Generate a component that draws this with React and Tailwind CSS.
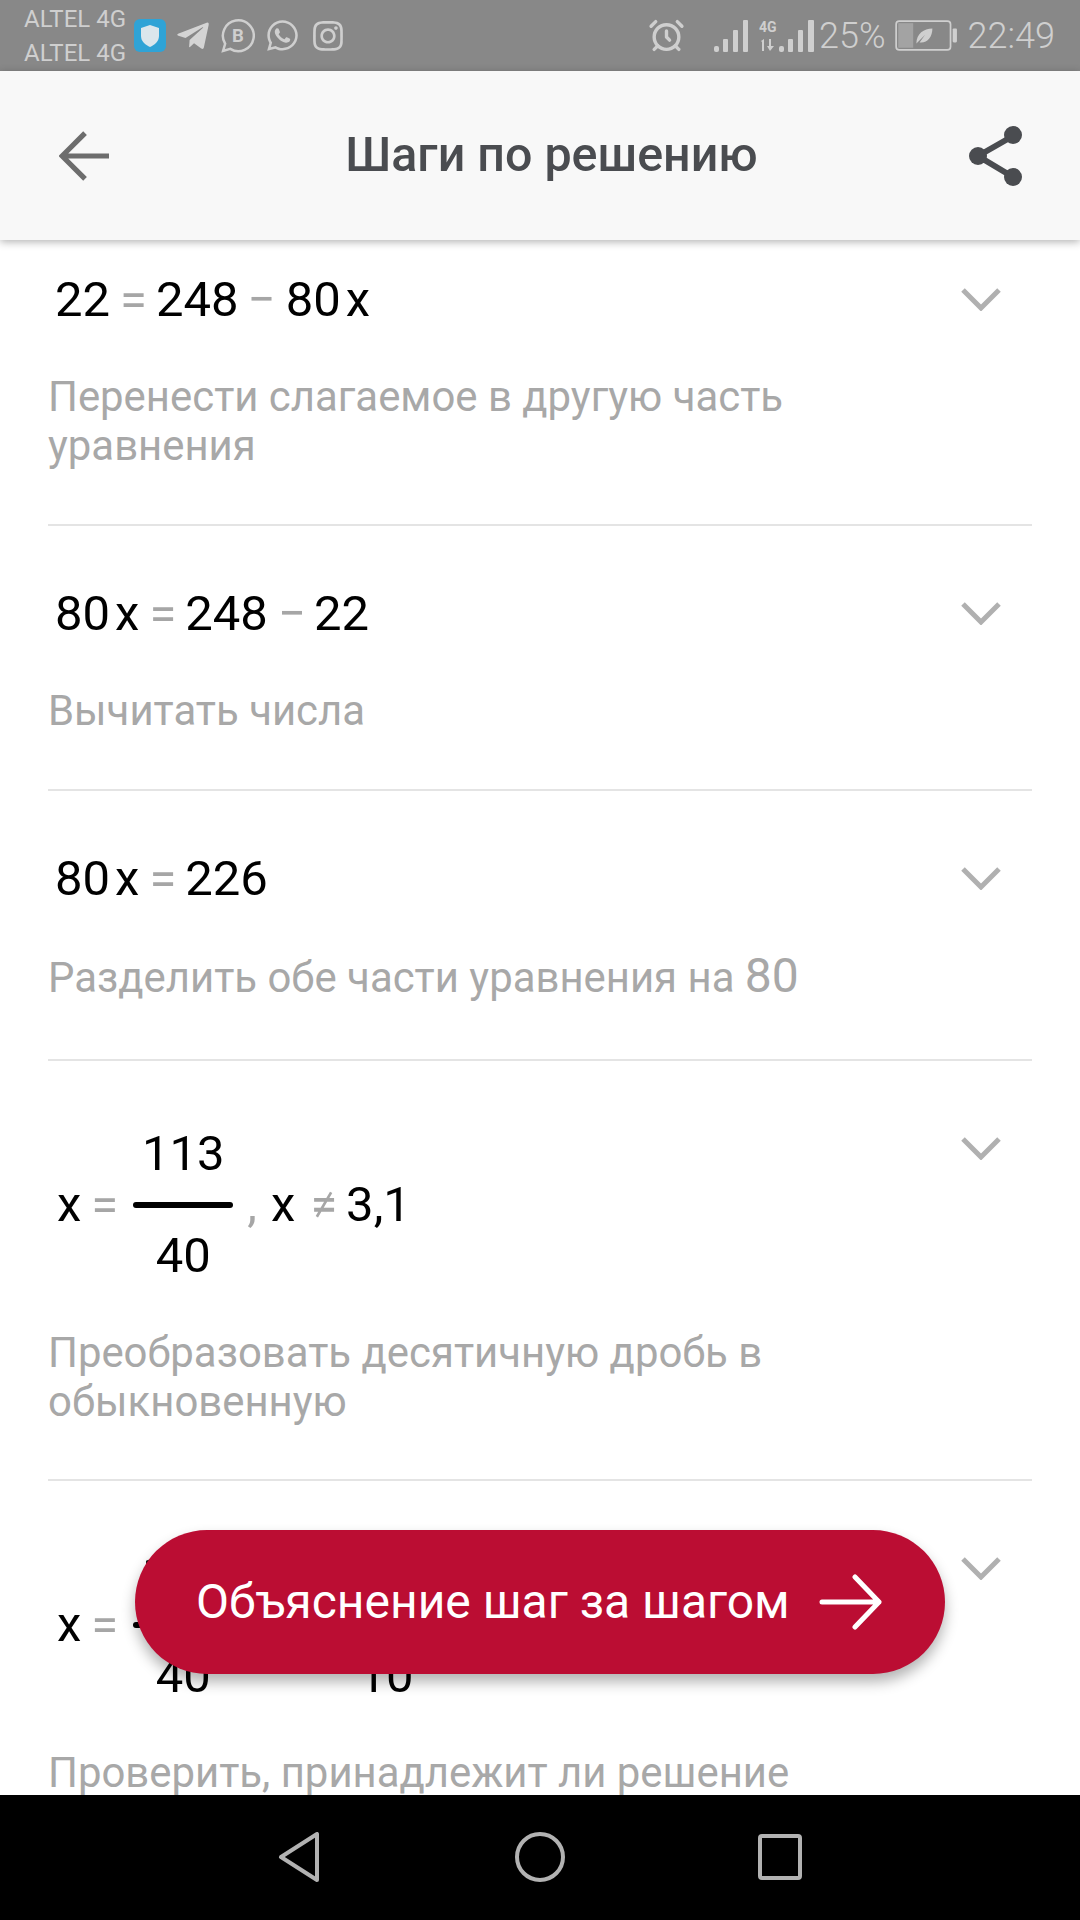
import { AlarmClock } from 'lucide-react'
import { FaInstagram, FaTelegramPlane, FaWhatsapp } from 'react-icons/fa'

const Num = ({ children, className = '' }) => <span className={`text-black ${className}`}>{children}</span>
const Op = ({ children, className = '' }) => <span className={`text-[#a6a6a6] ${className}`}>{children}</span>

function Fraction({ top, bottom, className = 'w-[100px]' }) {
    return (
        <div className={`flex flex-col items-center ${className}`}>
            <span className="h-[66px] leading-[66px] text-black">{top}</span>
            <span className="my-[15px] h-[6px] w-full rounded-full bg-black" />
            <span className="h-[66px] leading-[66px] text-black">{bottom}</span>
        </div>
    )
}

function Step({ desc, children, tall = false, pad = 'pb-[54px]' }) {
    return (
        <section className={`mx-12 border-b-2 border-[#e4e4e4] pt-[58px] ${pad}`}>
            <div className="flex items-start justify-between">
                <div className={`flex items-center text-[49px] ${tall ? 'mt-[2px] h-[168px] pl-[9px]' : 'h-[60px] pl-[7px]'}`}>
                    {children}
                </div>
                <svg className="mr-[31px] mt-[17px]" width="40" height="24" viewBox="0 0 40 24" fill="none" stroke="#b0b0b0" strokeWidth="5">
                    <path d="M2 3 L20 21 L38 3" />
                </svg>
            </div>
            <p className={`${tall ? 'mt-[39px]' : 'mt-[42px]'} max-w-[880px] text-[41.9px] leading-[49px] text-[#a8a8a8]`}>{desc}</p>
        </section>
    )
}

function StatusBar() {
    return (
        <header className="flex h-[71px] items-center justify-between bg-[#888888] pl-6 pr-[25px] text-[#cfcfcf]">
            <div className="flex items-center">
                <div className="w-[110px] text-[24px] leading-[34px]">
                    <div>ALTEL 4G</div>
                    <div>ALTEL 4G</div>
                </div>
                <div className="flex h-[33px] w-[32px] items-center justify-center rounded-md bg-[#2fa3d6]">
                    <svg width="22" height="24" viewBox="0 0 22 24">
                        <path d="M11 1 L20 4 V12 C20 18 15 21 11 23 C7 21 2 18 2 12 V4 Z" fill="#dbe6ec" />
                    </svg>
                </div>
                <FaTelegramPlane className="ml-[9px] text-[36px] text-[#d4d4d4]" />
                <svg className="ml-[9px]" width="35" height="35" viewBox="0 0 34 34" fill="none" stroke="#cfcfcf" strokeWidth="2.4">
                    <path d="M3 32 L5 25 A15 15 0 1 1 10 30 Z" />
                    <text x="17.5" y="23" textAnchor="middle" fontSize="18" fontWeight="700" fontFamily="Roboto" fill="#cfcfcf" stroke="none">B</text>
                </svg>
                <FaWhatsapp className="ml-[10px] text-[35px]" />
                <FaInstagram className="ml-[11px] text-[34px]" />
            </div>
            <div className="flex items-center">
                <AlarmClock size={37} strokeWidth={2.2} />
                <svg className="ml-[29px]" width="35" height="34" viewBox="0 0 35 34" fill="#cfcfcf">
                    <rect x="0" y="27" width="5" height="6" rx="2" />
                    <rect x="9" y="20" width="5" height="13" rx="1" />
                    <rect x="19" y="11" width="5" height="22" rx="1" />
                    <rect x="29" y="1" width="5" height="32" rx="1" />
                </svg>
                <svg className="ml-[10px]" width="56" height="34" viewBox="0 0 56 34" fill="#cfcfcf">
                    <text x="0" y="13" fontSize="14" fontWeight="700" fontFamily="Roboto">4G</text>
                    <path d="M2 22 L5 20 V32 H3 V23 Z M10 20 H12 V27 L15 27 L11 32 L8 27 H10 Z" />
                    <rect x="20" y="27" width="5" height="6" rx="2" />
                    <rect x="29" y="20" width="5" height="13" rx="1" />
                    <rect x="39" y="11" width="5" height="22" rx="1" />
                    <rect x="49" y="1" width="6" height="32" rx="1" />
                </svg>
                <span className="ml-[4px] text-[36px] font-light">25%</span>
                <svg className="ml-[9px]" width="62" height="32" viewBox="0 0 58 30" fill="none">
                    <rect x="1" y="1" width="51" height="27" rx="3" stroke="#cfcfcf" strokeWidth="1.6" />
                    <rect x="3" y="3" width="14" height="23" fill="#a3a3a3" />
                    <rect x="54" y="8" width="4" height="13" rx="1" fill="#cfcfcf" />
                    <path d="M20 22 C20 13 27 8 35 8 C35 16 30 22 23 21 L28 14 Z" fill="#cfcfcf" />
                </svg>
                <span className="ml-[11px] text-[36px] font-light">22:49</span>
            </div>
        </header>
    )
}

function NavBar() {
    return (
        <nav className="flex h-[125px] items-start justify-center bg-black pt-[37px]">
            <svg width="42" height="50" viewBox="0 0 42 50" fill="none" stroke="#b2b2b2" strokeWidth="4" strokeLinejoin="round">
                <path d="M39 2 V48 L3 25 Z" />
            </svg>
            <svg className="ml-[195px]" width="50" height="50" viewBox="0 0 50 50" fill="none" stroke="#b2b2b2" strokeWidth="4">
                <circle cx="25" cy="25" r="23" />
            </svg>
            <svg className="ml-[193px] mt-[2px]" width="44" height="46" viewBox="0 0 44 46" fill="none" stroke="#b2b2b2" strokeWidth="4">
                <rect x="2" y="2" width="40" height="42" rx="2" />
            </svg>
        </nav>
    )
}

export default function App() {
    return (
        <div className="relative flex h-[1920px] w-[1080px] flex-col overflow-hidden bg-white font-['Roboto',sans-serif]">
            <StatusBar />

            {/* Toolbar */}
            <div className="relative z-10 flex h-[169px] items-center bg-[#f8f8f8] pl-[59px] pr-[56px] shadow-[0_2px_8px_rgba(0,0,0,0.3)]">
                <svg width="50" height="50" viewBox="0 0 48 48" fill="none" stroke="#6d6d6d" strokeWidth="5">
                    <path d="M48 24 H3 M25 2 L3 24 L25 46" />
                </svg>
                <h1 className="flex-1 pl-[26px] text-center text-[48.4px] font-medium text-[#4a4c50]">Шаги по решению</h1>
                <svg width="56" height="60" viewBox="0 0 54 60" fill="#4a4c50" stroke="#4a4c50">
                    <path d="M44 10 L9 30 L44 51" fill="none" strokeWidth="6" />
                    <circle cx="44" cy="9" r="9" stroke="none" />
                    <circle cx="9" cy="30" r="9" stroke="none" />
                    <circle cx="44" cy="51" r="9" stroke="none" />
                </svg>
            </div>

            {/* Steps list, first row is scrolled partly under the toolbar */}
            <main className="min-h-0 flex-1 overflow-hidden">
                <div className="-mt-[28px]">
                    <Step desc="Перенести слагаемое в другую часть уравнения">
                        <Num>22</Num>
                        <Op className="ml-[10px]">=</Op>
                        <Num className="ml-[9px]">248</Num>
                        <Op className="ml-[9px]">−</Op>
                        <Num className="ml-[10px]">80</Num>
                        <Num className="ml-[5px]">x</Num>
                    </Step>
                    <Step desc="Вычитать числа">
                        <Num>80</Num>
                        <Num className="ml-[5px]">x</Num>
                        <Op className="ml-[10px]">=</Op>
                        <Num className="ml-[9px]">248</Num>
                        <Op className="ml-[10px]">−</Op>
                        <Num className="ml-[8px]">22</Num>
                    </Step>
                    <Step pad="pb-[57px]" desc={<>Разделить обе части уравнения на <span className="text-[48px]">80</span></>}>
                        <Num>80</Num>
                        <Num className="ml-[5px]">x</Num>
                        <Op className="ml-[10px]">=</Op>
                        <Num className="ml-[9px]">226</Num>
                    </Step>
                    <Step tall pad="pb-[53px]" desc="Преобразовать десятичную дробь в обыкновенную">
                        <Num>x</Num>
                        <Op className="ml-[10px]">=</Op>
                        <Fraction top="113" bottom="40" className="ml-[15px] w-[100px]" />
                        <Op className="ml-[14px]">,</Op>
                        <Num className="ml-[14px]">x</Num>
                        <Op className="ml-[15px]">≠</Op>
                        <Num className="ml-[9px]">3,1</Num>
                    </Step>
                    <Step tall desc="Проверить, принадлежит ли решение области допустимых значений">
                        <Num>x</Num>
                        <Op className="ml-[10px]">=</Op>
                        <Fraction top="113" bottom="40" className="ml-[15px] w-[100px]" />
                        <Op className="ml-[14px]">,</Op>
                        <Num className="ml-[14px]">x</Num>
                        <Op className="ml-[15px]">≠</Op>
                        <Fraction top="31" bottom="10" className="ml-[9px] w-[80px]" />
                    </Step>
                </div>
            </main>

            {/* Floating action button */}
            <button className="absolute left-[135px] top-[1530px] z-20 flex h-[144px] w-[810px] items-center rounded-[72px] bg-[#bb0d33] pl-[61px] text-[48px] text-white shadow-[0_8px_14px_rgba(0,0,0,0.3)]">
                <span>Объяснение шаг за шагом</span>
                <svg className="ml-[29px]" width="64" height="56" viewBox="0 0 64 56" fill="none" stroke="white" strokeWidth="5" strokeLinecap="round" strokeLinejoin="round">
                    <path d="M3 28 H60 M36 3 L60 28 L36 53" />
                </svg>
            </button>

            <NavBar />
        </div>
    )
}
